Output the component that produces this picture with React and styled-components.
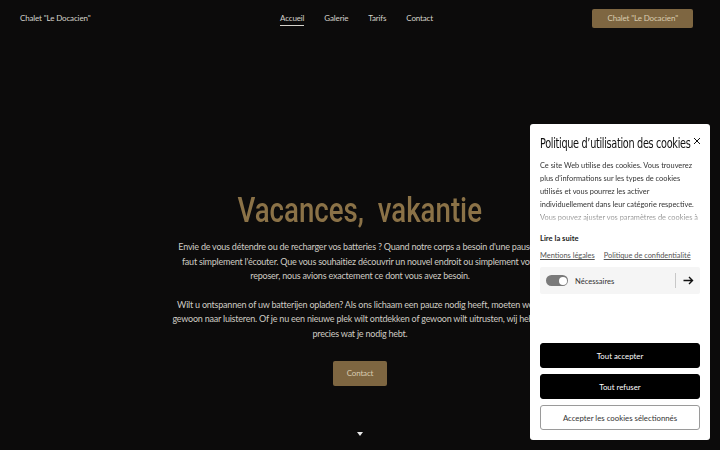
import React from "react";
import styled, { createGlobalStyle } from "styled-components";

const Global = createGlobalStyle`
  html, body { margin: 0; padding: 0; background: #0c0b0b; }
  body { font-family: Lato, "Noto Sans", sans-serif; }
  * { box-sizing: border-box; }
`;

const Page = styled.div`
  position: relative;
  width: 720px;
  height: 450px;
  overflow: hidden;
  background: #0c0b0b;
  color: #d8d4cc;
`;

const Header = styled.header`
  display: grid;
  grid-template-columns: 1fr auto 1fr;
  align-items: center;
  height: 36px;
  padding: 0 27px 0 20px;
`;

const Brand = styled.div`
  font-size: 8px;
  letter-spacing: -0.15px;
  color: #d6d3cc;
`;

const Nav = styled.nav`
  display: flex;
  gap: 20px;
  font-size: 8px;
  letter-spacing: -0.15px;
`;

const NavLink = styled.a`
  color: #d6d3cc;
  text-decoration: none;
  padding-bottom: 2px;
  border-bottom: 1px solid ${(p) => (p.$active ? "#d6d3cc" : "transparent")};
  margin-top: 3px;
`;

const HeaderButton = styled.a`
  justify-self: end;
  background: #7e6641;
  color: #d9ccb0;
  font-size: 8px;
  letter-spacing: -0.15px;
  padding: 4px 15px 5px;
  border-radius: 2px;
`;

const Hero = styled.main`
  display: flex;
  flex-direction: column;
  align-items: center;
  padding-top: 154px;
`;

const Title = styled.h1`
  margin: 0;
  font-family: Roboto, "Liberation Sans", sans-serif;
  font-weight: 500;
  font-size: 35px;
  line-height: 42px;
  color: #8b7247;
  white-space: pre;
  transform: scaleX(0.79);
`;

const Text = styled.p`
  margin: 8px 0 0;
  width: 380px;
  text-align: center;
  font-size: 9px;
  letter-spacing: -0.22px;
  line-height: 14.5px;
  color: #cfcbc4;
  & + & {
    margin-top: 14px;
  }
`;

const CtaButton = styled.a`
  margin-top: 20px;
  background: #7e6641;
  color: #d9ccb0;
  font-size: 8px;
  letter-spacing: -0.15px;
  padding: 7px 14px 8px;
  border-radius: 2px;
`;

const Caret = styled.div`
  margin-top: 46px;
  width: 0;
  height: 0;
  border-left: 3.5px solid transparent;
  border-right: 3.5px solid transparent;
  border-top: 4px solid #e8e8e8;
`;

const Cookie = styled.aside`
  position: absolute;
  left: 530px;
  top: 124px;
  width: 180px;
  height: 316px;
  background: #fff;
  border-radius: 3px;
  padding: 10px 10px;
  display: flex;
  flex-direction: column;
  color: #222;
`;

const Close = styled.button`
  position: absolute;
  right: 8px;
  top: 9px;
  border: 0;
  background: none;
  padding: 0;
  width: 10px;
  height: 10px;
  cursor: pointer;
`;

const CookieTitle = styled.h2`
  margin: 1px 0 0;
  font-family: "DejaVu Sans Condensed", "Liberation Sans Narrow", sans-serif;
  font-weight: 400;
  font-size: 13.5px;
  letter-spacing: -0.4px;
  color: #111;
  white-space: nowrap;
  transform-origin: left;
  transform: scaleX(0.8);
`;

const CookieText = styled.div`
  margin-top: 8px;
  font-size: 7.4px;
  line-height: 13px;
  color: #333;
  height: 65px;
  overflow: hidden;
  -webkit-mask-image: linear-gradient(to bottom, #000 75%, rgba(0,0,0,0.15) 100%);
  mask-image: linear-gradient(to bottom, #000 75%, rgba(0,0,0,0.15) 100%);
`;

const ReadMore = styled.div`
  margin-top: 9px;
  font-size: 7.6px;
  font-weight: 700;
  color: #222;
`;

const Links = styled.div`
  display: flex;
  gap: 9px;
  margin-top: 8px;
  font-size: 7.4px;
`;

const TextLink = styled.a`
  color: #555;
  text-decoration: underline;
  text-underline-offset: 1px;
`;

const ToggleRow = styled.div`
  margin-top: 7px;
  height: 27px;
  background: #f5f5f5;
  border-radius: 2px;
  display: flex;
  align-items: center;
  padding: 0 6px;
  font-size: 7.6px;
  color: #333;
`;

const Switch = styled.span`
  position: relative;
  width: 22px;
  height: 11px;
  border-radius: 6px;
  background: #7a7a7a;
  margin-right: 7px;
  &::after {
    content: "";
    position: absolute;
    right: 1.5px;
    top: 1.5px;
    width: 8px;
    height: 8px;
    border-radius: 50%;
    background: #fff;
  }
`;

const Grow = styled.span`
  flex: 1;
`;

const Divider = styled.span`
  width: 1px;
  height: 15px;
  background: #c8c8c8;
  margin-right: 7px;
`;

const Buttons = styled.div`
  margin-top: auto;
  display: flex;
  flex-direction: column;
  gap: 6px;
`;

const CookieButton = styled.button`
  height: 25px;
  border-radius: 3px;
  font-family: Lato, "Noto Sans", sans-serif;
  font-size: 7.8px;
  border: 1px solid ${(p) => (p.$outline ? "#9a9a9a" : "#000")};
  background: ${(p) => (p.$outline ? "#fff" : "#000")};
  color: ${(p) => (p.$outline ? "#333" : "#fff")};
`;

export default function App() {
  return (
    <Page>
      <Global />
      <Header>
        <Brand>Chalet "Le Docacien"</Brand>
        <Nav>
          <NavLink $active>Accueil</NavLink>
          <NavLink>Galerie</NavLink>
          <NavLink>Tarifs</NavLink>
          <NavLink>Contact</NavLink>
        </Nav>
        <HeaderButton>Chalet "Le Docacien"</HeaderButton>
      </Header>

      <Hero>
        <Title>{"Vacances,  vakantie"}</Title>
        <Text>
          Envie de vous détendre ou de recharger vos batteries ? Quand notre corps a besoin d'une pause, il
          faut simplement l'écouter. Que vous souhaitiez découvrir un nouvel endroit ou simplement vous
          reposer, nous avions exactement ce dont vous avez besoin.
        </Text>
        <Text>
          Wilt u ontspannen of uw batterijen opladen? Als ons lichaam een pauze nodig heeft, moeten we er
          gewoon naar luisteren. Of je nu een nieuwe plek wilt ontdekken of gewoon wilt uitrusten, wij hebben
          precies wat je nodig hebt.
        </Text>
        <CtaButton>Contact</CtaButton>
        <Caret />
      </Hero>

      <Cookie>
        <Close aria-label="Fermer">
          <svg width="8" height="8" viewBox="0 0 8 8">
            <path d="M1 1L7 7M7 1L1 7" stroke="#111" strokeWidth="1" />
          </svg>
        </Close>
        <CookieTitle>Politique d’utilisation des cookies</CookieTitle>
        <CookieText>
          Ce site Web utilise des cookies. Vous trouverez plus d'informations sur les types de cookies
          utilisés et vous pourrez les activer individuellement dans leur catégorie respective.
          Vous pouvez ajuster vos paramètres de cookies à tout moment.
        </CookieText>
        <ReadMore>Lire la suite</ReadMore>
        <Links>
          <TextLink>Mentions légales</TextLink>
          <TextLink>Politique de confidentialité</TextLink>
        </Links>
        <ToggleRow>
          <Switch />
          <Grow>Nécessaires</Grow>
          <Divider />
          <svg width="11" height="9" viewBox="0 0 11 9">
            <path d="M0.5 4.5H9.5M6 1L9.5 4.5L6 8" stroke="#111" strokeWidth="1.4" fill="none" />
          </svg>
        </ToggleRow>
        <Buttons>
          <CookieButton>Tout accepter</CookieButton>
          <CookieButton>Tout refuser</CookieButton>
          <CookieButton $outline>Accepter les cookies sélectionnés</CookieButton>
        </Buttons>
      </Cookie>
    </Page>
  );
}
